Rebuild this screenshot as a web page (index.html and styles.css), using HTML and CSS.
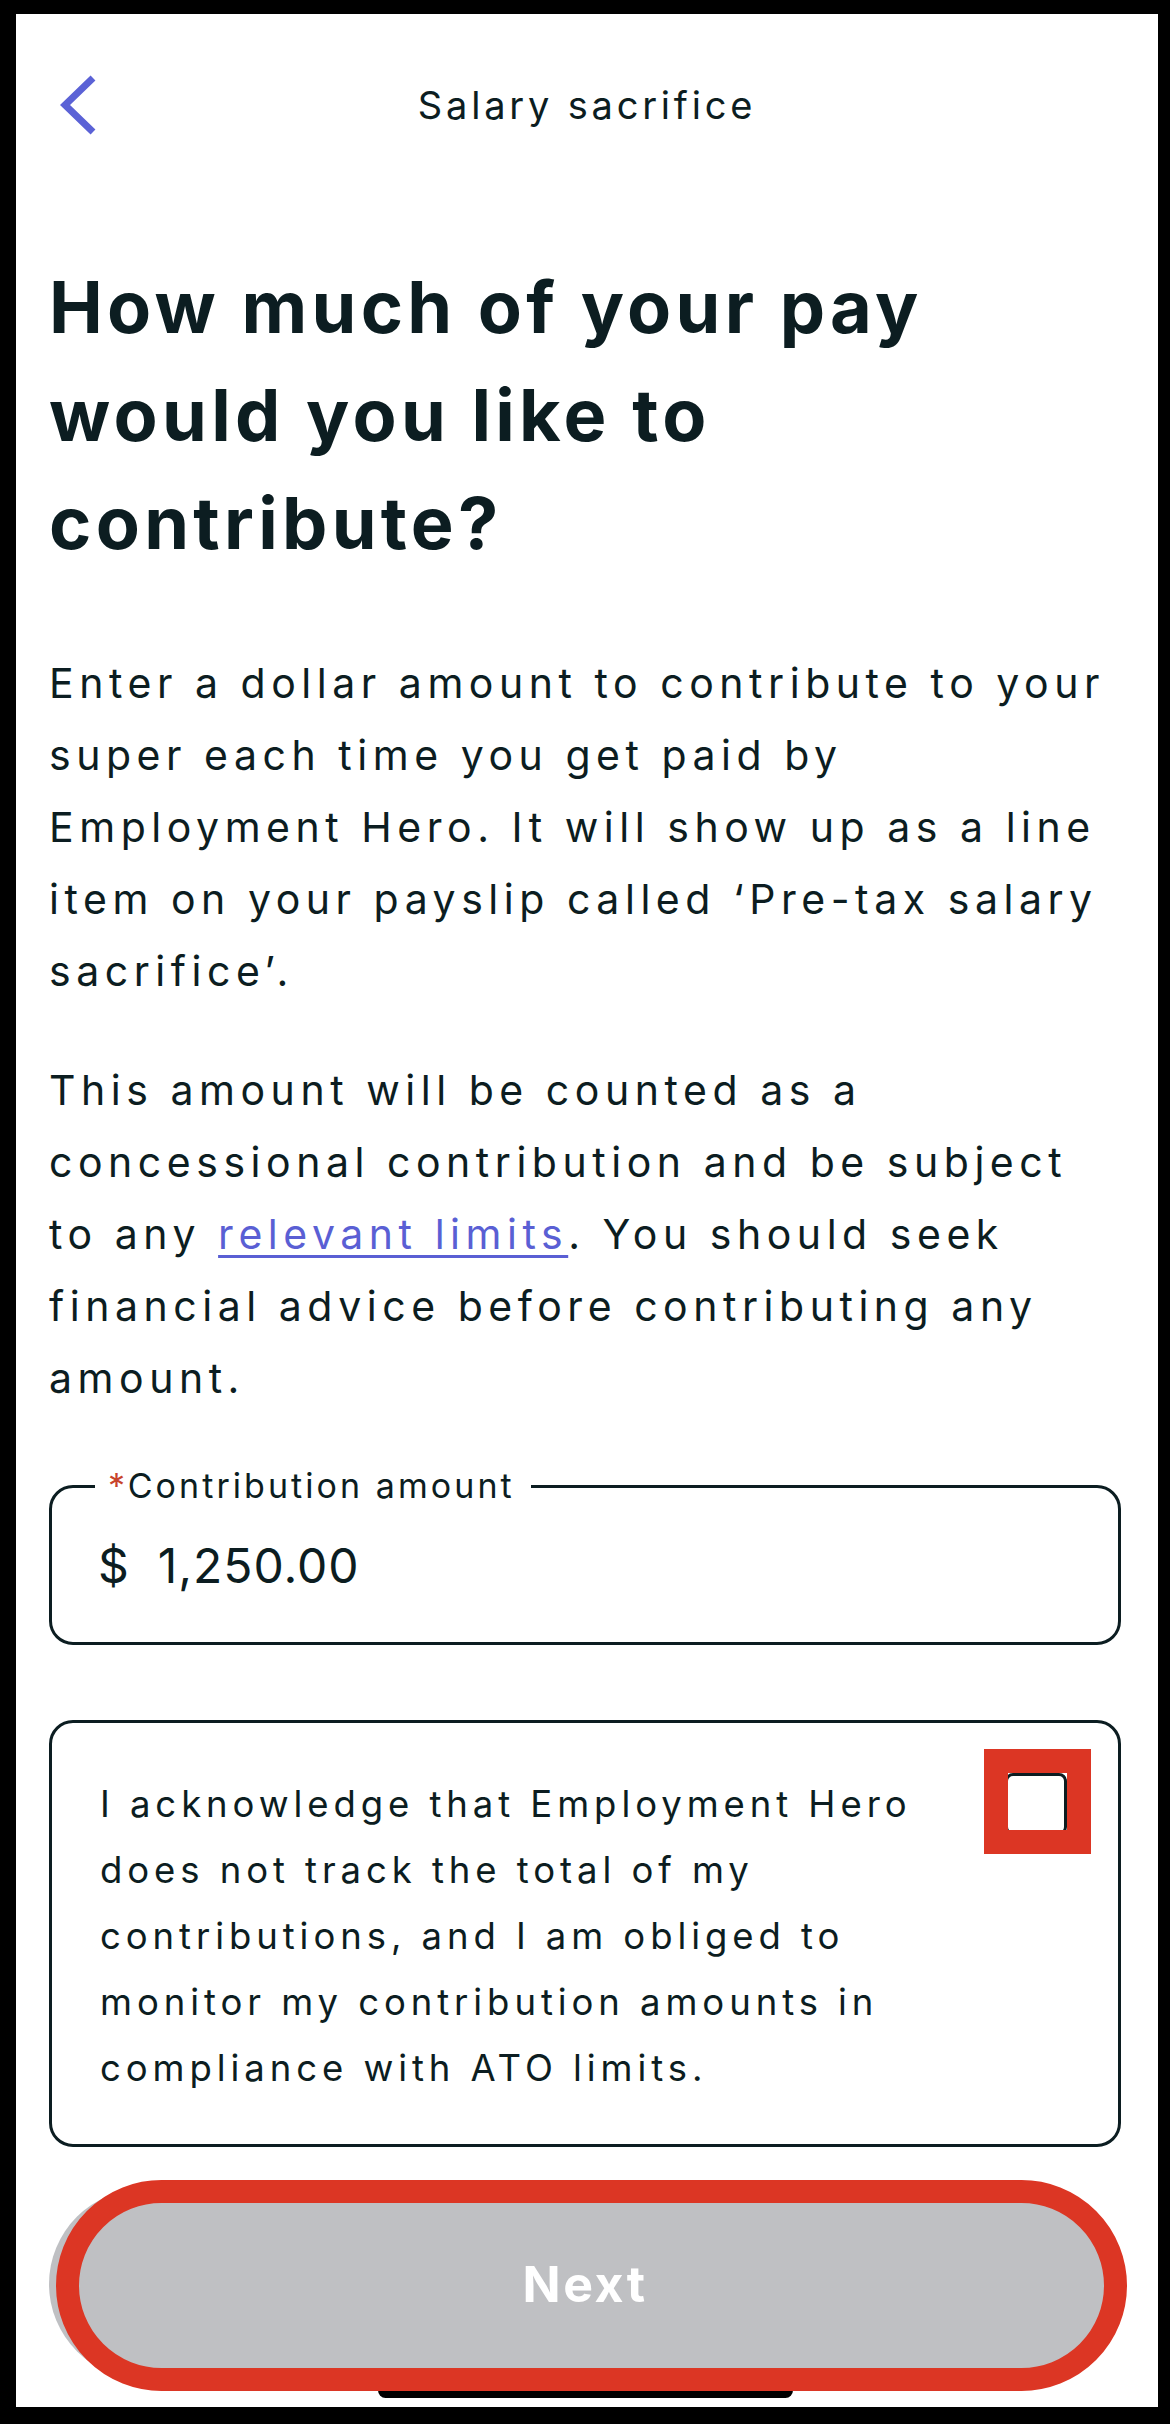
FILE: index.html
```html
<!DOCTYPE html>
<html lang="en">
<head>
  <meta charset="UTF-8" />
  <meta name="viewport" content="width=device-width, initial-scale=1.0"/>
  <title>Salary sacrifice</title>
  <link rel="stylesheet" href="styles.css">
</head>
<body>

  <div class="phone">
    <div class="screen">

      <!-- Top bar -->
      <header class="topbar">
        <a class="back" href="#" aria-label="Back">
          <svg width="36" height="60" viewBox="0 0 36 60">
            <polyline points="33,3 5,30 33,57" fill="none" stroke="#5b62d6" stroke-width="7" />
          </svg>
        </a>
        <div class="title">Salary sacrifice</div>
        <span></span>
      </header>

      <!-- Main content -->
      <main class="content">
        <h1>How much of your pay would you like to contribute?</h1>

        <p class="intro">Enter a dollar amount to contribute to your super each time you get paid by Employment Hero. It will show up as a line item on your payslip called ‘Pre-tax salary sacrifice’.</p>

        <p class="note">This amount will be counted as a concessional contribution and be subject to any <a href="#">relevant limits</a>. You should seek financial advice before contributing any amount.</p>

        <fieldset class="amount-field">
          <legend><span class="req">*</span>Contribution amount</legend>
          <div class="amount-value"><span class="currency">$</span>1,250.00</div>
        </fieldset>

        <label class="ack-card">
          <span class="ack-text">I acknowledge that Employment Hero does not track the total of my contributions, and I am obliged to monitor my contribution amounts in compliance with ATO limits.</span>
          <span class="checkbox">
            <span class="mark-box"></span>
          </span>
        </label>

        <div class="footer">
          <button class="next-btn" disabled>Next</button>
          <span class="mark-pill"></span>
        </div>

        <div class="home-indicator"></div>
      </main>

    </div>
  </div>

</body>
</html>
```

FILE: styles.css
```css
* {
  margin: 0;
  box-sizing: border-box;
  font-family: 'Inter', 'Noto Sans', sans-serif;
}

body {
  background: #000;
}

/* Phone frame */
.phone {
  width: 1170px;
  height: 2424px;
  padding: 14px 12px 17px 16px;
  background: #000;
}

.screen {
  position: relative;
  height: 2393px;
  background: #fff;
  overflow: hidden;
  color: #0c1d21;
}

/* Top bar */
.topbar {
  display: grid;
  grid-template-columns: 1fr auto 1fr;
  align-items: center;
  height: 120px;
  margin-top: 31px;
  padding: 0 44px;
}

.back {
  display: flex;
  width: 36px;
}

.title {
  font-size: 38px;
  letter-spacing: 0.1em;
  font-weight: 400;
}

/* Content */
.content {
  padding: 0 37px 0 33px;
}

h1 {
  margin-top: 88px;
  font-size: 72px;
  line-height: 108px;
  font-weight: 700;
  letter-spacing: 0.06em;
}

p {
  max-width: 1060px;
  font-size: 41px;
  line-height: 72px;
  letter-spacing: 0.135em;
}

.intro {
  margin-top: 70px;
}

.note {
  margin-top: 47px;
}

.note a {
  color: #5a5fd4;
  text-decoration: underline;
  text-underline-offset: 6px;
  text-decoration-thickness: 3px;
}

/* Amount field */
.amount-field {
  margin-top: 52px;
  padding: 0 0 0 46px;
  min-width: 0;
  border: 3px solid #0c1d21;
  border-radius: 24px;
}

.amount-field legend {
  margin-left: -3px;
  padding: 0 16px 0 13px;
  font-size: 34px;
  line-height: 40px;
  letter-spacing: 0.09em;
}

.req {
  color: #c8432b;
}

.amount-value {
  padding: 17px 0 33px;
  font-size: 48px;
  line-height: 86px;
  letter-spacing: 0.02em;
}

.currency {
  margin-right: 28px;
}

/* Acknowledge card */
.ack-card {
  display: flex;
  align-items: flex-start;
  gap: 40px;
  margin-top: 75px;
  padding: 48px 51px 43px 48px;
  border: 3px solid #0c1d21;
  border-radius: 24px;
}

.ack-text {
  flex: 1;
  font-size: 36.5px;
  line-height: 66px;
  letter-spacing: 0.135em;
}

.checkbox {
  position: relative;
  flex: none;
  width: 62px;
  height: 62px;
  margin-top: 2px;
  border: 3px solid #0c1d21;
  border-radius: 8px;
  background: #fff;
}

/* red review markers */
.mark-box {
  position: absolute;
  left: -24px;
  top: -27px;
  right: -27px;
  bottom: -22px;
  border: 24px solid #dc3624;
}

/* Footer */
.footer {
  position: relative;
  margin-top: 42px;
  z-index: 1;
}

.next-btn {
  display: block;
  width: 100%;
  height: 190px;
  border: none;
  border-radius: 95px;
  background: #bfc0c3;
  color: #fff;
  font-size: 50px;
  font-weight: 700;
  letter-spacing: 0.05em;
}

.mark-pill {
  position: absolute;
  left: 7px;
  right: -6px;
  top: -9px;
  bottom: -12px;
  border: 23px solid #dc3624;
  border-radius: 106px;
}

.home-indicator {
  width: 415px;
  height: 15px;
  margin: 4px auto 0;
  border-radius: 8px;
  background: #000;
}
```
